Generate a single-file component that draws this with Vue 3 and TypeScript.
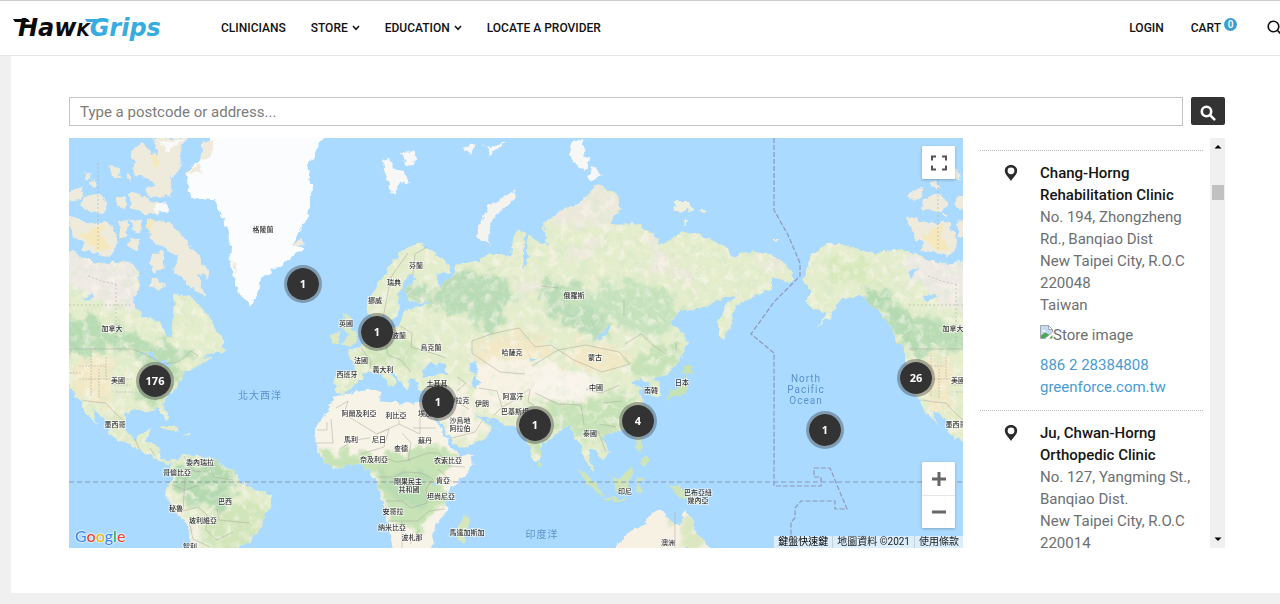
<script setup lang="ts">
import { ref } from 'vue'

interface Label { x: number; y: number; text: string }
interface Cluster { x: number; y: number; count: number }
interface Store { name: string[]; address: string[]; phone: string; site: string }

const query = ref('')

const VIEW = { x: 69, y: 138, w: 894, h: 410 }
const place = (c: Cluster) => ({
  left: ((c.x - VIEW.x) / VIEW.w) * 100 + '%',
  top: ((c.y - VIEW.y) / VIEW.h) * 100 + '%',
})

const clusters: Cluster[] = [
  { x: 303, y: 284, count: 1 },
  { x: 377, y: 332, count: 1 },
  { x: 155, y: 381, count: 176 },
  { x: 438, y: 402, count: 1 },
  { x: 535, y: 425, count: 1 },
  { x: 638, y: 421, count: 4 },
  { x: 825, y: 430, count: 1 },
  { x: 916, y: 378, count: 26 },
]

const labels: Label[] = [
  { x: 263, y: 232, text: '格陵蘭' },
  { x: 112, y: 331, text: '加拿大' },
  { x: 953, y: 331, text: '加拿大' },
  { x: 118, y: 383, text: '美國' },
  { x: 958, y: 383, text: '美國' },
  { x: 115, y: 427, text: '墨西哥' },
  { x: 956, y: 427, text: '墨西哥' },
  { x: 200, y: 465, text: '委內瑞拉' },
  { x: 177, y: 475, text: '哥倫比亞' },
  { x: 225, y: 504, text: '巴西' },
  { x: 176, y: 511, text: '秘魯' },
  { x: 203, y: 523, text: '玻利維亞' },
  { x: 190, y: 549, text: '智利' },
  { x: 346, y: 326, text: '英國' },
  { x: 416, y: 268, text: '芬蘭' },
  { x: 394, y: 285, text: '瑞典' },
  { x: 375, y: 303, text: '挪威' },
  { x: 399, y: 338, text: '波蘭' },
  { x: 361, y: 363, text: '法國' },
  { x: 347, y: 377, text: '西班牙' },
  { x: 383, y: 372, text: '義大利' },
  { x: 431, y: 350, text: '烏克蘭' },
  { x: 574, y: 298, text: '俄羅斯' },
  { x: 512, y: 355, text: '哈薩克' },
  { x: 595, y: 360, text: '蒙古' },
  { x: 596, y: 390, text: '中國' },
  { x: 651, y: 393, text: '南韓' },
  { x: 682, y: 385, text: '日本' },
  { x: 437, y: 386, text: '土耳其' },
  { x: 459, y: 403, text: '伊拉克' },
  { x: 482, y: 406, text: '伊朗' },
  { x: 513, y: 399, text: '阿富汗' },
  { x: 515, y: 414, text: '巴基斯坦' },
  { x: 359, y: 416, text: '阿爾及利亞' },
  { x: 396, y: 418, text: '利比亞' },
  { x: 425, y: 416, text: '埃及' },
  { x: 460, y: 423, text: '沙烏地' },
  { x: 460, y: 431, text: '阿拉伯' },
  { x: 351, y: 442, text: '馬利' },
  { x: 379, y: 442, text: '尼日' },
  { x: 425, y: 443, text: '蘇丹' },
  { x: 401, y: 451, text: '查德' },
  { x: 374, y: 462, text: '奈及利亞' },
  { x: 448, y: 463, text: '衣索比亞' },
  { x: 408, y: 484, text: '剛果民主' },
  { x: 409, y: 492, text: '共和國' },
  { x: 443, y: 483, text: '肯亞' },
  { x: 441, y: 499, text: '坦尚尼亞' },
  { x: 393, y: 514, text: '安哥拉' },
  { x: 392, y: 530, text: '納米比亞' },
  { x: 412, y: 540, text: '波札那' },
  { x: 467, y: 535, text: '馬達加斯加' },
  { x: 590, y: 436, text: '泰國' },
  { x: 625, y: 494, text: '印尼' },
  { x: 698, y: 495, text: '巴布亞紐' },
  { x: 698, y: 503, text: '幾內亞' },
  { x: 668, y: 545, text: '澳洲' },
]

const stores: Store[] = [
  {
    name: ['Chang-Horng', 'Rehabilitation Clinic'],
    address: ['No. 194, Zhongzheng', 'Rd., Banqiao Dist', 'New Taipei City, R.O.C', '220048', 'Taiwan'],
    phone: '886 2 28384808',
    site: 'greenforce.com.tw',
  },
  {
    name: ['Ju, Chwan-Horng', 'Orthopedic Clinic'],
    address: ['No. 127, Yangming St.,', 'Banqiao Dist.', 'New Taipei City, R.O.C', '220014'],
    phone: '',
    site: '',
  },
]
</script>

<template>
  <div class="page">
    <header class="header">
      <a class="logo" href="#" aria-label="HawkGrips"><span class="hawk">Haw<span class="small">k</span></span><span class="grips">Grips</span></a>
      <nav class="nav">
        <a href="#">CLINICIANS</a>
        <a href="#">STORE <svg class="chev" viewBox="0 0 8 6"><path d="M1 1l3 3.300L7 1" /></svg></a>
        <a href="#">EDUCATION <svg class="chev" viewBox="0 0 8 6"><path d="M1 1l3 3.300L7 1" /></svg></a>
        <a href="#">LOCATE A PROVIDER</a>
      </nav>
      <div class="account">
        <a href="#">LOGIN</a>
        <a href="#" class="cart">CART<span class="badge">0</span></a>
        <button class="find" aria-label="Search">
          <svg width="16" height="16" viewBox="0 0 16 16"><circle cx="6.5" cy="6.500" r="5.300" /><path d="M10.500 10.500l4 4" /></svg>
        </button>
      </div>
    </header>

    <main class="main">
      <form class="search" @submit.prevent>
        <input v-model="query" type="text" aria-label="Type a postcode or address" placeholder="Type a postcode or address..." />
        <button type="submit" aria-label="Find stores">
          <svg width="16" height="16" viewBox="0 0 16 16"><circle cx="6.500" cy="6.500" r="4.700" /><path d="M10.300 10.300l4 4" /></svg>
        </button>
      </form>

      <div class="locator">
        <section class="map" aria-label="Map">
          <svg class="world" :viewBox="`${VIEW.x} ${VIEW.y} ${VIEW.w} ${VIEW.h}`" preserveAspectRatio="xMidYMid slice">
            <defs>
              <filter id="coast" x="-5%" y="-5%" width="110%" height="110%">
                <feTurbulence type="fractalNoise" baseFrequency="0.13" numOctaves="3" seed="4" result="n" />
                <feDisplacementMap in="SourceGraphic" in2="n" scale="8" xChannelSelector="R" yChannelSelector="G" />
                <feGaussianBlur stdDeviation="0.4" />
              </filter>
              <filter id="soft" x="-30%" y="-30%" width="160%" height="160%">
                <feTurbulence type="fractalNoise" baseFrequency="0.07" numOctaves="3" seed="9" result="n" />
                <feDisplacementMap in="SourceGraphic" in2="n" scale="26" xChannelSelector="R" yChannelSelector="G" />
                <feGaussianBlur stdDeviation="1.6" />
              </filter>
              <filter id="mottle" x="0" y="0" width="100%" height="100%">
                <feTurbulence type="fractalNoise" baseFrequency="0.09" numOctaves="4" seed="21" />
                <feColorMatrix values="0 0 0 0 0.63  0 0 0 0 0.80  0 0 0 0 0.58  3.2 0 0 0 -1.55" />
              </filter>
              <filter id="relief" x="0" y="0" width="100%" height="100%">
                <feTurbulence type="fractalNoise" baseFrequency="0.12" numOctaves="3" seed="33" />
                <feColorMatrix values="0 0 0 0 0.97  0 0 0 0 0.93  0 0 0 0 0.84  3.5 0 0 0 -1.7" />
              </filter>
              <path id="na-shape" d="M-37 278L-29 256L-12 242L8 246L35 254L58 249L75 253L91 261L108 264L121 261L135 265L141 286L133 296L135 309L145 318L161 323L165 335L171 337L173 313L175 294L191 296L201 306L215 326L225 342L215 352L202 356L212 357L201 366L185 372L176 387L163 402L168 417L165 421L160 409L151 410L135 410L125 415L128 432L135 439L141 434L150 430L145 442L158 445L160 459L173 462L166 464L156 459L145 453L128 443L111 436L105 419L92 409L98 426L81 405L75 395L70 385L65 362L65 349L58 342L48 323L35 309L25 298L8 296L-2 303L-9 318L-25 326L-12 314L-25 309L-34 298L-29 293Z" />
              <path id="eu-shape" d="M336 392L335 373L355 370L351 358L346 350L357 348L370 341L379 331L382 321L386 331L399 326L404 314L408 309L431 303L410 302L405 290L415 277L408 275L398 294L400 309L391 323L385 315L372 318L366 307L372 293L388 269L398 253L418 243L432 251L450 265L448 273L435 274L440 285L450 279L458 263L472 264L495 253L511 259L513 236L521 228L525 237L523 269L528 259L527 236L535 238L548 246L543 224L558 213L581 201L598 184L618 196L620 209L608 224L635 223L651 233L661 245L668 240L681 231L701 236L725 246L731 256L751 251L775 256L793 273L791 281L771 279L771 289L751 299L735 306L733 323L722 342L717 327L726 306L738 294L721 299L705 308L681 309L671 323L682 331L687 343L680 360L667 373L655 379L661 389L658 399L651 395L649 384L641 377L631 384L642 388L638 395L647 408L645 418L635 428L618 431L606 434L603 440L610 452L601 460L595 450L590 448L589 460L596 473L590 468L584 458L581 445L574 440L569 427L558 432L542 447L539 461L533 459L526 439L515 427L495 420L478 416L468 407L481 420L493 425L485 439L458 450L451 439L438 420L435 402L435 393L418 389L416 378L410 380L408 390L403 388L399 377L386 369L398 381L393 387L380 373L368 370L363 376L351 389L341 394Z" />
              <path id="af-shape" d="M335 395L368 390L379 390L381 400L401 406L411 402L431 406L436 420L453 449L459 456L475 454L468 472L448 492L448 510L435 527L431 550L393 550L385 510L377 482L370 470L358 464L335 469L325 462L316 449L315 429L331 405Z" />
              <path id="sa-shape" d="M171 462L185 454L215 461L235 472L241 482L271 495L273 503L262 520L258 534L245 542L239 550L189 550L187 523L175 512L165 493L171 479Z" />
              <path id="au-shape" d="M615 550L625 536L645 523L655 512L665 511L670 521L681 526L684 510L691 519L699 535L711 550Z" />
              <clipPath id="land-clip">
                <use href="#eu-shape" /><use href="#af-shape" /><use href="#sa-shape" /><use href="#au-shape" /><use href="#na-shape" /><use href="#na-shape" x="840" />
              </clipPath>
              <clipPath id="green-clip">
                <use href="#eu-shape" /><use href="#sa-shape" /><use href="#na-shape" /><use href="#na-shape" x="840" />
              </clipPath>
              <g id="na-islands">
                <g fill="#efebdc">
                  <path d="M66 216L86 222L98 224L108 222L117 238L116 250L107 256L92 252L80 251L84 242L74 238Z" />
                  <path d="M148 220L168 221L178 231L193 248L207 268L209 278L198 275L205 296L190 289L182 278L174 270L178 258L162 246L149 238Z" />
                  <path d="M131 220L142 219L140 232L133 231ZM118 222L129 220L127 236L120 237ZM130 237L139 240L138 251L129 250ZM152 254L165 251L163 268L155 274L148 264ZM152 278L165 284L158 289L150 285Z" />
                  <path d="M69 193L83 187L80 199L68 201ZM83 198L96 194L108 202L104 213L82 210ZM116 197L125 197L124 209L117 207ZM130 193L144 195L156 203L165 205L164 213L145 214L130 209ZM109 165L118 169L121 178L113 178ZM126 172L131 174L131 182L126 180ZM91 182L97 181L98 187L91 187ZM84 174L92 173L90 179Z" />
                  <path d="M131 152L141 143L150 150L158 160L170 174L172 196L150 198L145 190L156 186L149 178L136 175Z" />
                  <path d="M153 138L188 138L179 150L180 170L172 178L158 160Z" />
                </g>
                <g fill="#f6e8bd">
                  <path d="M80 235L104 225L101 235L111 250L99 251ZM148 222L155 219L149 239ZM153 153L160 160L154 170Z" />
                </g>
                <g fill="#f8f9f8"><ellipse cx="161" cy="208" rx="7" ry="5" /><path d="M159 143L184 139L168 152Z" /></g>
              </g>
              <g id="na-tint">
                <path d="M70 326L90 315L106 326L128 333L149 342L172 346L194 350L185 362L154 370L132 353L103 350L70 355Z" fill="#b9dcb4" />
                <path d="M20 295L45 316L64 350L86 362L72 315L47 290Z" fill="#b5dab2" />
                <path d="M60 252L130 262L140 285L135 307L104 306L75 284Z" fill="#eee9e4" />
                <path d="M72 359L111 357L113 405L95 405L75 391Z" fill="#f3e9c7" />
                <path d="M138 385L178 360L182 372L160 406L133 401Z" fill="#bdddb0" />
                <path d="M-15 262L20 258L40 285L20 278L-10 286Z" fill="#d8e9bb" />
                <path d="M100 417L119 410L123 435L143 446L128 441Z" fill="#e6e8c0" />
              </g>
              <g id="na-lines">
                <path d="M98 163V250" stroke-dasharray="2 2" />
                <path d="M69 305H133M116 284V342M88 276L105 282L116 284" stroke-dasharray="2 2" />
                <path d="M69 349H132L145 354L163 364L178 362L191 351L198 356" />
                <path d="M79 366H106M91 355V397M99 369V398M106 357V379M79 379H133M111 385H130M116 392H133M70 373H82" stroke-dasharray="2 1" />
                <path d="M82 400L94 402L106 403L114 412L124 421" />
                <path d="M135 439L139 449M150 448L155 456" />
              </g>
            </defs>
            <rect x="69" y="138" width="894" height="410" fill="#aadaff" />
            <g filter="url(#coast)">
              <g fill="#e4edcc">
                <use href="#eu-shape" /><use href="#sa-shape" /><use href="#na-shape" /><use href="#na-shape" x="840" />
              </g>
              <use href="#af-shape" fill="#f8f3e7" />
              <use href="#au-shape" fill="#f7f1e3" />
              <use href="#na-islands" /><use href="#na-islands" x="840" />
              <path d="M211 134L203 156L187 174L191 198L215 199L223 219L231 246L230 263L238 293L252 306L261 279L281 265L302 249L293 242L308 216L313 189L307 166L327 134Z" fill="#fbfcfd" />
              <path d="M202 144L213 139L210 156L201 160ZM187 174L198 165L202 171ZM231 260L237 263L236 275ZM291 244L302 238L304 247Z" fill="#efeadb" />
              <path d="M382 160L390 158L393 168L405 173L410 184L400 182L394 195L388 187ZM400 154L414 151L418 159L409 165ZM464 147L475 144L474 152L466 153ZM484 145L490 148L496 146L506 140L503 147L490 155ZM574 141L582 139L584 153L589 158L587 170L577 167L570 156ZM593 165L601 174L594 180L588 177Z" fill="#f7f7f5" />
              <path d="M477 238L481 221L489 206L504 197L514 190L517 197L502 209L491 220L488 232L491 246Z" fill="#f4f3ee" />
              <path d="M675 201L689 201L693 210L676 212ZM696 208L706 210L702 213ZM684 220L690 223L685 226ZM772 240L779 240L777 244ZM942 214L946 214L946 217Z" fill="#eeefdc" />
              <path d="M342 327L345 313L351 316L350 326L358 338L354 345L342 345L348 335ZM331 335L340 332L339 344L331 345Z" fill="#dce9c5" />
              <path d="M684 365L691 365L692 374L684 375ZM687 374L689 387L683 395L672 397L667 402L669 393L680 388Z" fill="#c7e2b3" />
              <path d="M633 416L637 414L636 422ZM635 436L641 438L641 452L637 448ZM643 454L650 460L646 467L640 460ZM577 469L586 474L602 490L601 497L587 484ZM602 498L627 499L624 502L603 500ZM613 478L622 476L631 468L633 475L626 493L614 490ZM636 479L645 476L639 484L643 493L636 492ZM666 484L680 487L696 498L707 505L696 504L685 500L677 494ZM538 460L544 465L540 469Z" fill="#cde5b8" />
              <path d="M467 514L470 520L464 540L457 541L457 527Z" fill="#d5e6bd" />
              <path d="M159 426L171 426L179 431L172 431ZM183 434L192 434L190 438ZM215 345L226 349L221 354L214 352Z" fill="#e3ebca" />
              <g clip-path="url(#land-clip)">
                <g filter="url(#soft)">
                  <use href="#na-tint" /><use href="#na-tint" x="840" />
                  <path d="M436 280L473 270L500 277L516 297L502 324L486 338L481 320L451 312L430 309ZM403 286L421 283L434 293L427 302L409 301ZM538 287L572 282L618 305L605 323L609 339L584 336L567 319L549 312Z" fill="#b9dbb6" />
                  <path d="M556 298L614 282L665 289L684 310L666 336L634 335L603 314Z" fill="#c5e2bc" />
                  <path d="M545 205L600 178L626 203L610 230L588 222L560 229ZM566 249L587 243L607 236L594 258L576 264ZM516 281L542 280L538 293L520 295ZM650 232L663 243L667 268L653 278L648 256ZM750 252L783 262L782 274L756 262ZM672 254L690 274L683 285L670 270Z" fill="#ece9dc" />
                  <path d="M488 333L519 329L538 337L557 352L546 359L508 367L478 359L470 350ZM558 350L592 345L627 352L640 360L600 375L579 366Z" fill="#f3e8c6" />
                  <path d="M475 360L530 361L557 365L591 376L602 394L572 406L543 401L528 390L524 410L494 417L472 404L460 387L435 386L443 397L440 415L459 444L493 428L470 413L478 388Z" fill="#f8f2e5" />
                  <path d="M538 369L591 378L599 387L574 405L550 402L533 391Z" fill="#f9f4ec" />
                  <path d="M540 400L575 405L602 397L620 389L643 412L638 427L610 435L585 446L576 431L552 425ZM524 432L541 426L545 445L536 459ZM624 363L660 342L684 344L665 375L643 377Z" fill="#c6e2b6" />
                  <path d="M360 338L388 335L417 343L410 365L386 367L360 360Z" fill="#d1e6bc" />
                  <path d="M318 449L357 455L382 455L409 450L434 450L458 455L439 483L446 505L414 532L388 510L378 482L360 464L330 470Z" fill="#c7e2b5" />
                  <path d="M380 470L426 474L431 505L399 504L377 487Z" fill="#b9dcb2" />
                  <path d="M173 472L207 459L234 472L243 486L216 509L192 507L175 490Z" fill="#b4d9b0" />
                  <path d="M206 517L243 504L264 508L254 536L238 550L206 546Z" fill="#d1e5b9" />
                  <path d="M188 520L198 520L200 550L188 550ZM170 498L177 502L187 521L177 515Z" fill="#f1ede2" />
                  <path d="M665 526L685 514L708 546L680 551L688 531Z" fill="#dbe7c1" />
                </g>
              </g>
              <g clip-path="url(#green-clip)">
                <rect x="69" y="138" width="894" height="410" filter="url(#mottle)" opacity=".4" />
                <rect x="69" y="138" width="894" height="410" filter="url(#relief)" opacity=".55" />
              </g>
              <path d="M422 371L432 362L436 367L442 364L449 374L435 375L424 377ZM469 364L477 361L479 369L474 375L481 384L475 389L471 382L473 376ZM598 338L608 326L611 329L600 340ZM528 358L538 358L531 361ZM434 482L438 482L436 487ZM83 299L94 293L96 296L87 301ZM923 299L934 293L936 296L927 301ZM907 273L917 268L912 279ZM142 353L153 350L158 360L150 356ZM156 360L175 364L168 366Z" fill="#aadaff" />
            </g>
            <g class="borders">
              <use href="#na-lines" /><use href="#na-lines" x="840" />
              <path d="M336 408L348 401L344 414L377 434L399 424V409M399 424L420 434V409M413 428H436M317 430H327V422M316 443H333L331 419M340 449L354 440L370 438M377 434L389 429L384 447L361 454M402 433L411 443L408 460L428 453L438 453M374 462L382 457L397 462L411 460M378 477H394L404 472L421 473L433 479L426 489L427 503L411 508L402 501L385 501M388 521L418 521L429 511L445 509M402 522V548M419 530L410 544M439 453L449 466L465 467M438 469L452 482M433 492L446 498M442 414L453 400L469 409M452 438L475 432L482 421M457 391L466 383L457 377M479 388L497 391L502 407L494 415M502 407L517 399L529 389M530 389L528 402L534 405M532 366L558 350L551 345L535 347L519 328L491 334L472 341L472 353L485 362L500 372L525 374M558 350L574 360L602 372L630 364L619 352L586 345L558 350M625 344L641 334L654 346L666 354M535 393L558 404L581 405L584 425M590 434L598 431L606 452M599 424L616 427M361 348L371 361L370 369M385 342L388 355L401 360L411 372M400 326L412 333L411 347L438 355L446 358M413 275L415 254L427 247M383 318L391 277L408 253M184 456L193 471L206 472M207 459L214 477L233 480M172 485L185 490L199 485M185 478L183 511L198 507L207 515L206 530L217 540L233 532M189 520L193 539L210 547M217 509L219 520L249 523M624 300V316M586 389L601 393L620 385M603 403L622 401M541 286L559 288" />
              <path d="M69 482H963" class="dateline" stroke-dasharray="5 3" />
              <path class="dateline" stroke-dasharray="5 2" d="M774 138V210L788 235L800 263V276L774 302L751 334L774 353V486H821V477H814V468H830L847 509H835V501H801L795 508V518L791 522V548" />
              <path d="M676 342V351M675 512V548" />
            </g>
            <g class="labels">
              <text v-for="(l, i) in labels" :key="i" :x="l.x" :y="l.y">{{ l.text }}</text>
            </g>
            <g class="seas">
              <text x="260" y="399">北大西洋</text>
              <text x="542" y="538">印度洋</text>
              <text x="806" y="382" class="latin">North</text>
              <text x="806" y="393" class="latin">Pacific</text>
              <text x="806" y="404" class="latin">Ocean</text>
            </g>
          </svg>

          <button v-for="(c, i) in clusters" :key="i" class="cluster" :style="place(c)">{{ c.count }}</button>

          <button class="ctrl full" aria-label="Fullscreen">
            <svg width="16" height="16" viewBox="0 0 16 16"><path d="M1 5.500V1.500H5M11 1.500H15V5.500M15 10.500V14.500H11M5 14.500H1V10.500" /></svg>
          </button>
          <div class="ctrl zoom">
            <button aria-label="Zoom in"><svg width="16" height="16" viewBox="0 0 16 16"><path d="M1 8H15M8 1V15" /></svg></button>
            <button aria-label="Zoom out"><svg width="16" height="16" viewBox="0 0 16 16"><path d="M1 8H15" /></svg></button>
          </div>
          <a class="google" href="#" aria-label="Google"><span class="b">G</span><span class="r">o</span><span class="y">o</span><span class="b">g</span><span class="g">l</span><span class="r">e</span></a>
          <div class="credits">
            <button>鍵盤快速鍵</button>
            <span>地圖資料 ©2021</span>
            <a href="#">使用條款</a>
          </div>
        </section>

        <aside class="results">
          <ul>
            <li v-for="s in stores" :key="s.name[0]">
              <svg class="pin" width="14" height="18" viewBox="0 0 14 18"><path fill-rule="evenodd" d="M7 1C3.400 1 .8 3.500 .8 6.800C.8 10.500 5 13.500 7 17C9 13.500 13.200 10.500 13.200 6.800C13.200 3.500 10.600 1 7 1ZM7 3.400A3.400 3.400 0 1 1 7 10.200A3.400 3.400 0 1 1 7 3.400Z" /></svg>
              <div class="info">
                <strong><span v-for="n in s.name" :key="n">{{ n }}</span></strong>
                <address><span v-for="a in s.address" :key="a">{{ a }}</span></address>
                <template v-if="s.phone">
                  <div class="broken">
                    <svg width="13" height="16" viewBox="0 0 13 16"><path d="M.5 1.500H8.500L12.500 5.500V8L5 14.500H.5Z" fill="#c6d9f5" stroke="#a3a8ae" /><path d="M8.500 1.500V5.500H12.500Z" fill="#fff" stroke="#a3a8ae" /><path d="M2 7.500C2 5.500 5 5.500 6 7.500Z" fill="#fff" /><path d="M1 14V11.500L5 8.500L9 10.500L5 14ZM9 14.500L12.500 11V14.500Z" fill="#4da650" /></svg>
                    <span>Store image</span>
                  </div>
                  <a href="#">{{ s.phone }}</a>
                  <a href="#">{{ s.site }}</a>
                </template>
              </div>
            </li>
          </ul>
          <div class="bar" aria-hidden="true">
            <svg width="8" height="5" viewBox="0 0 8 5"><path d="M.5 4.500L4 1L7.500 4.500Z" /></svg>
            <i></i>
            <svg width="8" height="5" viewBox="0 0 8 5"><path d="M.5 .5L4 4L7.500 .5Z" /></svg>
          </div>
        </aside>
      </div>
    </main>
  </div>
</template>

<style>
body { background: #f0f0f0; }
</style>

<style scoped>
* { box-sizing: border-box; }
.page { font-family: Roboto, "Liberation Sans", "Noto Sans CJK TC", sans-serif; min-height: 100vh; overflow: hidden; }
a { color: inherit; text-decoration: none; }
button { font: inherit; padding: 0; border: 0; background: none; cursor: pointer; }
svg { display: block; }
.header { display: flex; align-items: center; height: 56px; padding: 0 0 0 14px; background: #fff; border-top: 1px solid #ccc; border-bottom: 1px solid #e6e6e6; overflow: hidden; }
.logo { width: 207px; font: italic 700 24px/28px "DejaVu Sans", sans-serif; color: #0b0b0b; white-space: nowrap; padding-left: 4px; }
.logo .small { font-variant-caps: small-caps; }
.hawk, .grips { position: relative; }
.grips { color: #36ace0; }
.hawk::before, .grips::before { content: ""; position: absolute; left: -4px; top: 5px; width: 15px; height: 3px; background: currentColor; transform: skewX(35deg); }
.nav, .account { display: flex; align-items: center; font-size: 12px; line-height: 20px; font-weight: 500; color: #111; white-space: nowrap; }
.nav { gap: 25px; }
.nav a { display: flex; align-items: center; gap: 4px; }
.chev { width: 8px; height: 6px; fill: none; stroke: #111; stroke-width: 1.5; }
.account { margin-left: auto; gap: 27px; margin-right: -3px; }
.cart { display: flex; }
.badge { width: 13px; height: 13px; margin: 0 3px 0 3px; border-radius: 50%; background: #3a9fd4; color: #fff; font-size: 10px; line-height: 13px; text-align: center; }
.find svg { fill: none; stroke: #111; stroke-width: 1.6; }
.main { margin: 0 0 11px 11px; padding: 41px 55px 45px 58px; background: #fff; }
.search { display: flex; gap: 8px; }
.search input { flex: 1; min-width: 0; height: 29px; padding: 0 10px; border: 1px solid #c4c4c4; border-radius: 0; outline: 0; font: 15px/20px Roboto, sans-serif; color: #444; background: #fff; }
.search input::placeholder { color: #7c7c7c; opacity: 1; }
.search button { display: grid; place-items: center; width: 34px; height: 28px; border-radius: 2px; background: #333; }
.search button svg { fill: none; stroke: #fff; stroke-width: 2.6; stroke-linecap: round; margin-top: 3px; }
.locator { display: flex; margin-top: 12px; height: 410px; }
.map { position: relative; flex: 1; min-width: 0; overflow: hidden; background: #aadaff; }
.world { width: 100%; height: 100%; }
.borders { fill: none; stroke: #a9aa9d; stroke-width: .7; opacity: .75; }
.dateline { stroke: #8583a0; stroke-width: 1.2; }
.labels { font: 500 7px "Noto Sans CJK TC", sans-serif; fill: #333; text-anchor: middle; stroke: #fff; stroke-width: 1.5px; paint-order: stroke; stroke-opacity: .75; }
.seas { font: 10px "Noto Sans CJK TC", sans-serif; fill: #5a92cb; text-anchor: middle; letter-spacing: 1px; }
.latin { font-family: Roboto, sans-serif; }
.cluster { position: absolute; width: 38px; height: 38px; border-radius: 50%; border: 3px solid rgba(70, 70, 70, .42); background: #333; background-clip: padding-box; transform: translate(-50%, -50%); color: #fff; font: 700 11px/32px "Open Sans", sans-serif; text-align: center; }
.ctrl { position: absolute; right: 8px; width: 33px; background: #fff; border-radius: 1px; box-shadow: 0 1px 3px rgba(0, 0, 0, .25); }
.ctrl svg { fill: none; stroke: #666; stroke-width: 3; }
.full { top: 8px; height: 33px; display: grid; place-items: center; }
.full svg { stroke-width: 2; stroke: #555; }
.zoom { bottom: 20px; display: flex; flex-direction: column; }
.zoom button { display: grid; place-items: center; height: 33px; }
.zoom button + button { border-top: 1px solid #e6e6e6; }
.google { position: absolute; left: 6px; bottom: 1px; font: 500 16px/22px Lato, sans-serif; text-shadow: 0 0 1px #fff, 0 0 2px #fff, 0 0 2px #fff; }
.b { color: #4285f4; } .r { color: #ea4335; } .y { color: #f5b400; } .g { color: #34a853; }
.credits { position: absolute; right: 0; bottom: 0; display: flex; height: 12px; background: rgba(232, 243, 250, .8); font: 10px/12px Roboto, "Noto Sans CJK TC", sans-serif; color: #222; white-space: nowrap; }
.credits > * { padding: 0 4px; }
.credits > * + * { border-left: 1px solid #c3d3dd; }
.results { display: flex; width: 262px; padding-left: 17px; overflow: hidden; }
.results ul { flex: 1; margin: 0; padding: 12px 0 0; list-style: none; }
.results li { display: flex; margin-right: 7px; border-top: 1px dotted #bbb; padding: 11px 0 12px 24px; font-size: 15px; line-height: 22px; color: #6d6f73; white-space: nowrap; }
.pin { margin: 2px 22px 0 0; fill: #2b2b2b; flex: none; }
.info span, .info > a { display: block; }
.info strong { font-weight: 500; color: #151515; }
.info address { font-style: normal; }
.info > a { color: #4a9bd3; }
.broken { display: flex; margin: 8px 0; }
.bar { width: 15px; height: 100%; background: #f0f0f0; display: flex; flex-direction: column; align-items: center; padding: 6px 0; }
.bar i { width: 12px; height: 15px; margin: 36px 0 auto; background: #c1c1c1; }
</style>
